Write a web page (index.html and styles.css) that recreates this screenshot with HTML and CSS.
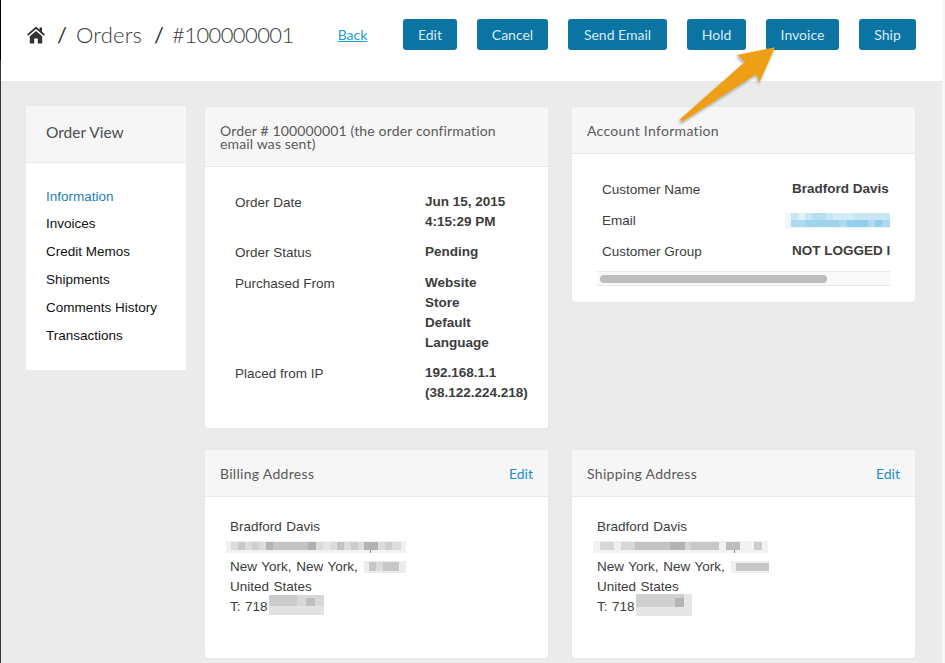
FILE: index.html
```html
<!DOCTYPE html>
<html lang="en">
<head>
<meta charset="utf-8">
<title>Order #100000001</title>
<link rel="stylesheet" href="styles.css">
</head>
<body>
<div class="page">
  <header class="topbar">
    <nav class="crumbs">
      <svg class="home" viewBox="0 0 18 18" width="18" height="18" aria-hidden="true"><path d="M9 .6 0 8.4l1.2 1.4L9 3.1l7.8 6.7L18 8.4l-3-2.6V1.4h-2.4v2.3zM2.8 10.3V17.6h4.4v-5.2h3.6v5.2h4.4v-7.3L9 4.9z"/></svg>
      <span class="sep s-one">/</span><span class="c-orders">Orders</span><span class="sep s-two">/</span><span class="c-num">#100000001</span>
    </nav>
    <a class="back" href="#">Back</a>
    <div class="actions">
      <button class="btn b-edit">Edit</button>
      <button class="btn b-cancel">Cancel</button>
      <button class="btn b-send">Send Email</button>
      <button class="btn b-hold">Hold</button>
      <button class="btn b-invoice">Invoice</button>
      <button class="btn b-ship">Ship</button>
    </div>
  </header>
  <main class="content">
    <aside class="side">
      <h2 class="side-title">Order View</h2>
      <ul class="side-list">
        <li class="active">Information</li>
        <li>Invoices</li>
        <li>Credit Memos</li>
        <li>Shipments</li>
        <li>Comments History</li>
        <li>Transactions</li>
      </ul>
    </aside>
    <div class="cards">
      <section class="card order-card">
        <h3 class="card-head order-head">Order # 100000001 (the order confirmation email was sent)</h3>
        <dl class="facts">
          <dt>Order Date</dt><dd>Jun 15, 2015<br>4:15:29 PM</dd>
          <dt>Order Status</dt><dd>Pending</dd>
          <dt>Purchased From</dt><dd>Website<br>Store<br>Default<br>Language</dd>
          <dt>Placed from IP</dt><dd>192.168.1.1<br>(38.122.224.218)</dd>
        </dl>
      </section>
      <section class="card account-card">
        <h3 class="card-head">Account Information</h3>
        <div class="scroller">
          <dl class="account">
            <dt>Customer Name</dt><dd>Bradford Davis</dd>
            <dt>Email</dt><dd class="email-cell">
              <svg class="mosaic-block" width="106" height="15" viewBox="0 0 106 15" aria-hidden="true">
                <rect width="106" height="15" fill="#eef7fc"/>
                <rect x="6" y="0" width="100" height="7" fill="#c9e6f5"/>
                <rect x="6" y="7" width="100" height="7" fill="#aedaf1"/>
                <rect x="13" y="0" width="7" height="7" fill="#dff0fa"/>
                <rect x="27" y="0" width="14" height="7" fill="#b6def3"/>
                <rect x="48" y="0" width="21" height="7" fill="#d3ebf7"/>
                <rect x="20" y="7" width="34" height="7" fill="#9ed3ee"/>
                <rect x="62" y="7" width="21" height="7" fill="#92cfec"/>
                <rect x="90" y="7" width="7" height="7" fill="#92cfec"/>
              </svg>
            </dd>
            <dt>Customer Group</dt><dd class="clip">NOT LOGGED IN</dd>
          </dl>
          <div class="track"><div class="thumb"></div></div>
        </div>
      </section>
      <section class="card addr-card">
        <h3 class="card-head split"><span>Billing Address</span><a href="#">Edit</a></h3>
        <address class="addr">
          Bradford Davis<br>
          <svg class="mosaic m-street" width="180" height="12" viewBox="0 0 180 12" aria-hidden="true">
            <rect width="180" height="12" fill="#f2f2f2"/>
            <rect x="5" y="1" width="170" height="8" fill="#dcdcdc"/>
            <rect x="12" y="1" width="7" height="8" fill="#c8c8c8"/>
            <rect x="26" y="1" width="7" height="8" fill="#cfcfcf"/>
            <rect x="40" y="1" width="42" height="8" fill="#c4c4c4"/>
            <rect x="40" y="1" width="7" height="8" fill="#b4b4b4"/>
            <rect x="82" y="1" width="8" height="8" fill="#b0b0b0"/>
            <rect x="97" y="1" width="7" height="8" fill="#e6e6e6"/>
            <rect x="111" y="1" width="7" height="8" fill="#c2c2c2"/>
            <rect x="125" y="1" width="7" height="8" fill="#cccccc"/>
            <rect x="138" y="1" width="14" height="8" fill="#b2b2b2"/>
            <rect x="159" y="1" width="7" height="8" fill="#cdcdcd"/>
            <rect x="144" y="9" width="1" height="3" fill="#888"/>
          </svg><br>
          New York, New York, <svg class="mosaic m-zip" width="42" height="12" viewBox="0 0 42 12" aria-hidden="true"><rect width="42" height="12" fill="#ececec"/><rect x="5" y="1" width="30" height="9" fill="#c6c6c6"/><rect x="12" y="1" width="7" height="9" fill="#dcdcdc"/></svg><br>
          United States<br>
          T: 718<svg class="mosaic m-phone" width="55" height="20" viewBox="0 0 55 20" aria-hidden="true"><rect width="55" height="20" fill="#e2e2e2"/><rect x="0" y="0" width="28" height="11" fill="#cbcbcb"/><rect x="28" y="0" width="27" height="11" fill="#d8d8d8"/><rect x="37" y="3" width="9" height="8" fill="#bfbfbf"/></svg>
        </address>
      </section>
      <section class="card addr-card">
        <h3 class="card-head split"><span>Shipping Address</span><a href="#">Edit</a></h3>
        <address class="addr">
          Bradford Davis<br>
          <svg class="mosaic m-street" width="175" height="12" viewBox="0 0 175 12" aria-hidden="true">
            <rect width="175" height="12" fill="#f2f2f2"/>
            <rect x="7" y="1" width="100" height="8" fill="#d6d6d6"/>
            <rect x="21" y="1" width="7" height="8" fill="#eeeeee"/>
            <rect x="42" y="1" width="35" height="8" fill="#c4c4c4"/>
            <rect x="77" y="1" width="15" height="8" fill="#b2b2b2"/>
            <rect x="98" y="1" width="28" height="8" fill="#c8c8c8"/>
            <rect x="133" y="1" width="14" height="8" fill="#bdbdbd"/>
            <rect x="161" y="1" width="8" height="8" fill="#cdcdcd"/>
            <rect x="141" y="9" width="1" height="3" fill="#888"/>
          </svg><br>
          New York, New York, <svg class="mosaic m-zip" width="38" height="12" viewBox="0 0 38 12" aria-hidden="true"><rect width="38" height="12" fill="#f0f0f0"/><rect x="5" y="2" width="33" height="8" fill="#c8c8c8"/></svg><br>
          United States<br>
          T: 718<svg class="mosaic m-phone" width="56" height="22" viewBox="0 0 56 22" aria-hidden="true"><rect width="56" height="22" fill="#e6e6e6"/><rect x="0" y="0" width="48" height="13" fill="#d0d0d0"/><rect x="39" y="4" width="9" height="9" fill="#b4b4b4"/></svg>
        </address>
      </section>
    </div>
  </main>
</div>
<svg class="arrow" width="110" height="90" viewBox="670 40 110 90" aria-hidden="true">
  <defs><filter id="arrow-shadow" x="-20%" y="-20%" width="140%" height="140%"><feDropShadow dx="-1" dy="2" stdDeviation="1.5" flood-color="#000" flood-opacity=".35"/></filter></defs>
  <polygon points="775,47.3 737,55 745,61.7 680,119.3 682,121.7 756.7,74 759.3,82.7" fill="#ef9f17" filter="url(#arrow-shadow)"/>
</svg>
</body>
</html>
```
FILE: styles.css
```css
* { box-sizing: border-box; }
html, body { margin: 0; height: 100%; }
body {
  width: 945px;
  height: 663px;
  overflow: hidden;
  position: relative;
  padding-left: 1px;
  background: linear-gradient(#000 0 60px, #2c3e4a 60px);
  font-family: "Liberation Sans", Arial, sans-serif;
  font-size: 13.5px;
  line-height: 20px;
  color: #3c3c3c;
}
.page {
  width: 944px;
  height: 663px;
  border-right: 3px solid #f6f6f6;
  background: #ebebeb;
  display: flex;
  flex-direction: column;
}
.topbar {
  flex: 0 0 81px;
  background: #fff;
  display: flex;
  align-items: flex-start;
  padding: 19px 26px 0 26px;
}
.crumbs {
  display: flex;
  align-items: center;
  height: 31px;
  font-family: Lato, sans-serif;
  font-size: 22px;
  font-weight: 300;
  color: #3a3a3a;
}
.home { fill: #333; margin-top: 1px; }
.sep { color: #333; font-weight: 400; }
.s-one { margin: 0 9px 0 12px; }
.c-orders { letter-spacing: .2px; }
.s-two { margin: 0 8px 0 12px; }
.c-num { letter-spacing: -.6px; }
.back {
  margin-left: 44px;
  height: 31px;
  line-height: 31px;
  font-family: Lato, sans-serif;
  font-size: 14px;
  color: #1f9bd8;
  text-decoration: underline;
}
.actions { margin-left: auto; display: flex; gap: 20px; }
.btn {
  height: 31px;
  padding: 0;
  border: 0;
  border-radius: 3px;
  background: #0b74a3;
  color: #d9eaf2;
  font-family: Lato, sans-serif;
  font-size: 14px;
}
.b-edit { width: 54px; }
.b-cancel { width: 71px; }
.b-send { width: 99px; }
.b-hold { width: 59px; }
.b-invoice { width: 73px; }
.b-ship { width: 57px; }
.content {
  flex: 1;
  min-height: 0;
  display: flex;
  align-items: flex-start;
  padding: 25px 0 0 25px;
}
.side {
  flex: 0 0 160px;
  height: 264px;
  margin-right: 19px;
  background: #fff;
}
.side-title {
  margin: 0;
  height: 57px;
  padding: 15px 20px 0;
  background: #f6f6f6;
  border-bottom: 1px solid #ebebeb;
  font-family: Lato, sans-serif;
  font-size: 15.5px;
  line-height: 22px;
  font-weight: 400;
  color: #4a4f52;
}
.side-list {
  list-style: none;
  margin: 0;
  padding: 24px 0 0 20px;
  color: #111;
}
.side-list li { height: 28px; line-height: 20px; }
.side-list li:first-child { height: 27px; }
.active { color: #1d7fae; }
.cards {
  margin-top: 1px;
  display: grid;
  grid-template-columns: 343px 343px;
  column-gap: 24px;
  row-gap: 22px;
  grid-template-rows: 321px 208px;
  align-items: start;
}
.card {
  background: #fff;
  border-radius: 3px;
  box-shadow: 0 0 1px rgba(0,0,0,.12);
  overflow: hidden;
}
.order-card { height: 321px; }
.account-card { height: 195px; }
.addr-card { height: 208px; }
.card-head {
  margin: 0;
  height: 47px;
  padding: 14px 15px 0;
  background: #f6f6f6;
  border-bottom: 1px solid #e8e8e8;
  font-family: Lato, sans-serif;
  font-size: 14px;
  line-height: 20px;
  font-weight: 400;
  letter-spacing: .3px;
  color: #5a5a5a;
}
.order-head {
  height: 60px;
  padding: 17px 30px 0 15px;
  line-height: 13px;
  letter-spacing: .15px;
}
.split { display: flex; justify-content: space-between; }
.split a {
  color: #1f8fc9;
  text-decoration: none;
  letter-spacing: 0;
}
.facts {
  margin: 0;
  padding: 25px 10px 0 30px;
  display: grid;
  grid-template-columns: 190px 1fr;
  row-gap: 10px;
}
dt { padding-top: 1px; }
dd { margin: 0; font-weight: 700; }
.scroller {
  margin: 25px 25px 0 25px;
  width: 293px;
  overflow: hidden;
}
.account {
  margin: 0;
  padding-left: 5px;
  display: grid;
  grid-template-columns: 190px 120px;
  row-gap: 10px;
}
.email-cell { margin-left: -7px; }
.mosaic-block { display: block; margin-top: 3px; }
.clip { white-space: nowrap; }
.track {
  margin-top: 9px;
  height: 15px;
  background: #f9f9f9;
  border-top: 1px solid #e8e8e8;
  border-bottom: 1px solid #e8e8e8;
  padding: 3px 3px 0;
}
.thumb {
  width: 227px;
  height: 8px;
  border-radius: 4px;
  background: #bdbdbd;
}
.addr {
  font-style: normal;
  padding: 20px 0 0 25px;
  word-spacing: .8px;
}
.mosaic { vertical-align: middle; }
.m-street { margin-left: -4px; }
.m-zip { margin-left: 2px; }
.m-phone { margin-top: -4px; margin-left: 1px; }
.arrow {
  position: absolute;
  left: 670px;
  top: 40px;
  pointer-events: none;
}
```
